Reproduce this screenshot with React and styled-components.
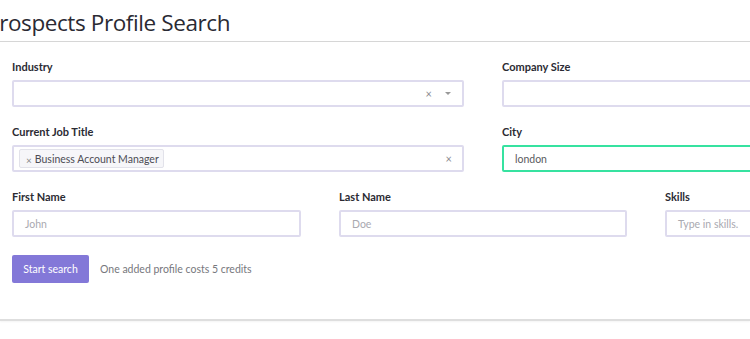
import React from "react";
import styled, { createGlobalStyle } from "styled-components";

const GlobalStyle = createGlobalStyle`
  html, body {
    margin: 0;
    padding: 0;
    background: #ffffff;
    overflow: hidden;
  }
  body {
    font-family: Lato, "Open Sans", sans-serif;
    color: #333;
  }
`;

const Page = styled.div`
  width: 750px;
  height: 339px;
  overflow: hidden;
`;

const Header = styled.div`
  height: 42px;
  border-bottom: 1px solid #d6d6d6;
  box-sizing: border-box;
`;

const Title = styled.h1`
  margin: 0 0 0 -14px;
  padding-top: 7px;
  font-family: "Open Sans", Lato, sans-serif;
  font-weight: 400;
  font-size: 22.5px;
  letter-spacing: -0.4px;
  line-height: 32px;
  color: #2a2a33;
  white-space: nowrap;
`;

const Form = styled.div`
  width: 942px;
  padding: 18px 0 0 12px;
`;

const Row = styled.div`
  display: grid;
  grid-template-columns: ${(p) => (p.cols === 3 ? "289px 288px 289px" : "452px 452px")};
  column-gap: 38px;
  margin-bottom: 18px;
`;

const Field = styled.div`
  display: flex;
  flex-direction: column;
  gap: 6px;
`;

const Label = styled.label`
  font-size: 11px;
  font-weight: 700;
  line-height: 14px;
  color: #2b2b33;
`;

const Box = styled.div`
  height: 27px;
  box-sizing: border-box;
  border: 2px solid ${(p) => (p.focused ? "#36e2a0" : "#dedbee")};
  border-radius: 2px;
  display: flex;
  align-items: center;
  padding: 0 10px 0 ${(p) => (p.tags ? "5px" : "11px")};
  font-size: 10.5px;
  color: ${(p) => (p.placeholder ? "#a9a9b0" : "#5a5a60")};
  background: #fff;
`;

const Grow = styled.div`
  flex: 1;
  display: flex;
  align-items: center;
`;

const Chip = styled.span`
  display: inline-flex;
  align-items: center;
  gap: 3px;
  height: 17px;
  padding: 0 4px 0 6px;
  background: #f6f6f9;
  border: 1px solid #e2e2ea;
  border-radius: 2px;
  color: #4c4c54;
  font-size: 10.5px;
`;

const ChipX = styled.span`
  font-size: 10px;
  color: #888;
  margin-top: 2px;
`;

const Clear = styled.span`
  font-size: 11px;
  color: #8a8a90;
  margin-right: ${(p) => (p.gap ? "13px" : "0")};
`;

const Caret = styled.span`
  width: 0;
  height: 0;
  border-left: 3px solid transparent;
  border-right: 3px solid transparent;
  border-top: 3px solid #999;
  margin-right: 1px;
`;

const Actions = styled.div`
  display: flex;
  align-items: center;
  gap: 11px;
  margin-top: 4px;
`;

const Button = styled.button`
  width: 77px;
  height: 28px;
  border: none;
  border-radius: 2px;
  background: #8378d8;
  color: #fff;
  font-family: Lato, sans-serif;
  font-size: 10.5px;
  padding: 0;
  cursor: pointer;
`;

const Note = styled.span`
  font-size: 10.5px;
  color: #77777d;
`;

const Footer = styled.div`
  margin-top: 36px;
  border-top: 2px solid #dedede;
  box-shadow: 0 1px 2px rgba(0, 0, 0, 0.05);
`;

const App = () => {
  return (
    <Page>
      <GlobalStyle />
      <Header>
        <Title>Prospects Profile Search</Title>
      </Header>
      <Form>
        <Row>
          <Field>
            <Label>Industry</Label>
            <Box>
              <Grow />
              <Clear gap>×</Clear>
              <Caret />
            </Box>
          </Field>
          <Field>
            <Label>Company Size</Label>
            <Box />
          </Field>
        </Row>
        <Row>
          <Field>
            <Label>Current Job Title</Label>
            <Box tags>
              <Grow>
                <Chip>
                  <ChipX>×</ChipX>Business Account Manager
                </Chip>
              </Grow>
              <Clear>×</Clear>
            </Box>
          </Field>
          <Field>
            <Label>City</Label>
            <Box focused>london</Box>
          </Field>
        </Row>
        <Row cols={3}>
          <Field>
            <Label>First Name</Label>
            <Box placeholder>John</Box>
          </Field>
          <Field>
            <Label>Last Name</Label>
            <Box placeholder>Doe</Box>
          </Field>
          <Field>
            <Label>Skills</Label>
            <Box placeholder>Type in skills.</Box>
          </Field>
        </Row>
        <Actions>
          <Button>Start search</Button>
          <Note>One added profile costs 5 credits</Note>
        </Actions>
      </Form>
      <Footer />
    </Page>
  );
};

export default App;
